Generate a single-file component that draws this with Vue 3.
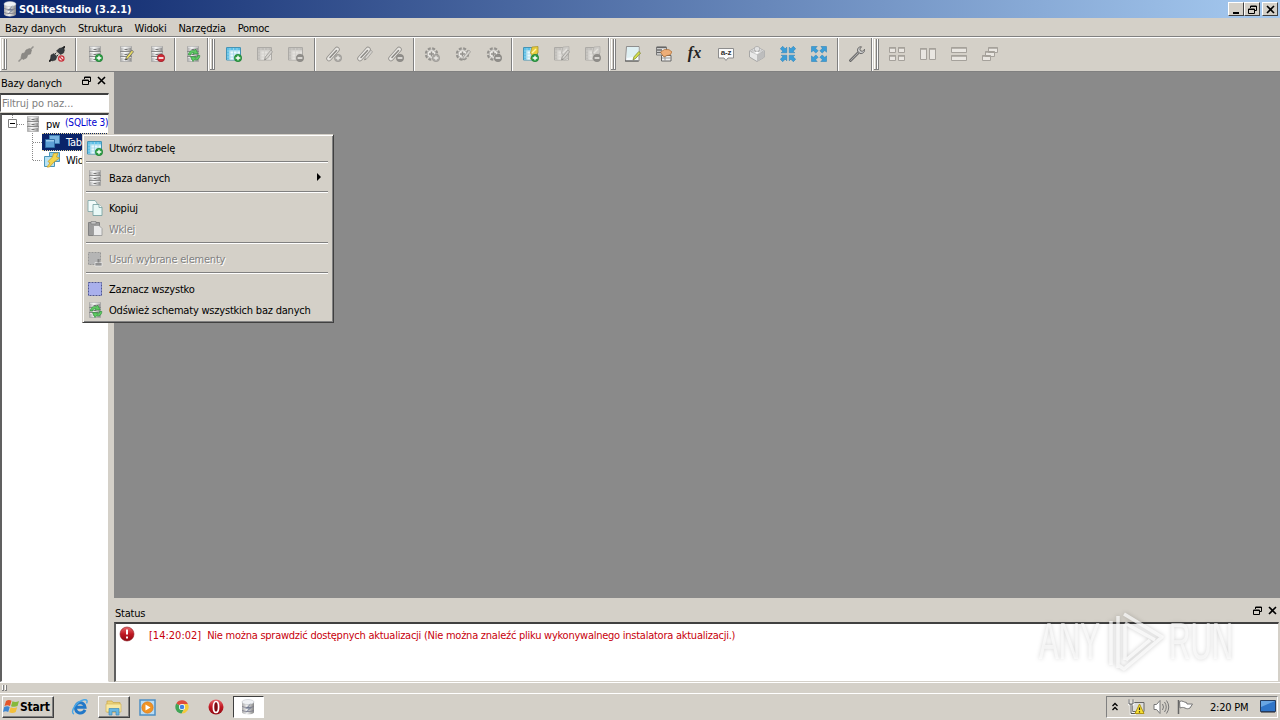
<template>
  <div class="screen">
    <svg class="defs" width="0" height="0">
      <defs>
        <linearGradient id="metal" x1="0" x2="1">
          <stop offset="0" stop-color="#a9a9a9" />
          <stop offset=".4" stop-color="#f2f2f2" />
          <stop offset="1" stop-color="#858585" />
        </linearGradient>
        <linearGradient id="ball" x1="0" y1="0" x2="0" y2="1">
          <stop offset="0" stop-color="#e8696c" />
          <stop offset=".5" stop-color="#c01822" />
          <stop offset="1" stop-color="#8f0a12" />
        </linearGradient>
      </defs>
      <symbol id="plus" viewBox="0 0 16 16">
        <circle cx="12" cy="12" r="3.7" fill="#2ea044" stroke="#15752b" stroke-width=".6" />
        <path d="M9.7 12h4.6M12 9.7v4.6" stroke="#fff" stroke-width="1.3" />
      </symbol>
      <symbol id="minus" viewBox="0 0 16 16">
        <circle cx="12" cy="12" r="3.7" fill="#cf2a35" stroke="#951720" stroke-width=".6" />
        <path d="M9.6 12h4.8" stroke="#fff" stroke-width="1.6" />
      </symbol>
      <symbol id="pencil" viewBox="0 0 16 16">
        <path d="M7.5 14l.8-3 5.500-6.800 1.800 1.500-5.500 6.800z" fill="#e9dc62" stroke="#666" stroke-width=".8" />
        <path d="M7.5 14l.5-1.600 1 .8z" fill="#222" />
      </symbol>
      <symbol id="database" viewBox="0 0 16 16">
        <path d="M2.500.5h11v15h-11z" fill="url(#metal)" stroke="#a5a5a5" stroke-width=".7" />
        <path d="M2 5.500h12M2 10.500h12" stroke="#8a8a8a" />
        <path d="M3 1.200h10M3 6.500h10M3 11.500h10" stroke="#fff" opacity=".6" />
        <path d="M6.500 3.500h3M6.500 8.500h3M6.500 13.500h3" stroke="#777" />
      </symbol>
      <symbol id="db-add" viewBox="0 0 16 16"><use href="#database" /><use href="#plus" /></symbol>
      <symbol id="db-edit" viewBox="0 0 16 16"><use href="#database" /><use href="#pencil" /></symbol>
      <symbol id="db-del" viewBox="0 0 16 16"><use href="#database" /><use href="#minus" /></symbol>
      <symbol id="db-refresh" viewBox="0 0 16 16">
        <use href="#database" />
        <path d="M3.500 9c0-3.500 3-5.300 5.800-4.300L10.500 3l2.700 4.800H7.800l1-1.300C7 6.200 6 7.200 5.800 9z" fill="#5fca63" stroke="#218a30" stroke-width=".6" />
        <path d="M14.800 9.500c0 3.500-3 5.300-5.500 4.300L8 15.500 5.500 10.700h5.300l-.9 1.300c1.600.2 2.500-.8 2.700-2.500z" fill="#5fca63" stroke="#218a30" stroke-width=".6" />
      </symbol>
      <symbol id="plug" viewBox="0 0 16 16">
        <path d="M.5 15.500L5 11M11 5L15.500.5" stroke="#555" stroke-width="1.500" />
        <path d="M3 11.500l1-4 2.500-.5L8 4l3.500-1.500 2 1.500-1 4-2.500.5L8.500 12 5 13.500z" fill="#444" stroke="#333" stroke-width=".6" />
      </symbol>
      <symbol id="unplug" viewBox="0 0 16 16">
        <path d="M0 15.500l3-2.500M13.500 3L16 .3" stroke="#222" stroke-width="2" />
        <path d="M1.500 13L2 9l3-1.500 3 3L6.500 14l-3.500 1zM7.500 5L10 2.500l4-1L15.500 4l-1 3-3 1.500z" fill="#363c40" stroke="#222" stroke-width=".5" />
        <path d="M6 8l1.300-1.300M8 10l1.300-1.300" stroke="#333" />
        <circle cx="12.300" cy="12.500" r="2.700" fill="#f6dada" stroke="#c9303a" stroke-width="1.200" />
        <path d="M10.500 10.700l3.700 3.700" stroke="#c9303a" stroke-width="1.200" />
      </symbol>
      <symbol id="table" viewBox="0 0 16 16">
        <path d="M.5 1.500h14v12.500H.5z" fill="#fff" stroke="#4593b4" />
        <path d="M1 2h13v2.500H1zM1 4.500h2.500v9H1z" fill="#5cc0e8" />
        <path d="M4 5h10v8.500H4z" fill="#eaf8fd" />
        <path d="M1 5h13M1 8h13M1 11h13M4 2v12M7.500 2v12M11 2v12" stroke="#a3d8ea" stroke-width=".8" />
      </symbol>
      <symbol id="table-add" viewBox="0 0 16 16"><use href="#table" /><use href="#plus" /></symbol>
      <symbol id="table-edit" viewBox="0 0 16 16"><use href="#table" /><use href="#pencil" /></symbol>
      <symbol id="table-del" viewBox="0 0 16 16"><use href="#table" /><use href="#minus" /></symbol>
      <symbol id="clip" viewBox="0 0 16 16">
        <path d="M3 12.500L11 3.500" stroke="#555" stroke-width="5.500" stroke-linecap="round" />
        <path d="M3 12.500L11 3.500" stroke="#fff" stroke-width="3.800" stroke-linecap="round" />
        <path d="M4 11.500L10.500 4.500" stroke="#444" stroke-width="1.500" stroke-linecap="round" />
      </symbol>
      <symbol id="clip-add" viewBox="0 0 16 16"><use href="#clip" /><use href="#plus" /></symbol>
      <symbol id="clip-edit" viewBox="0 0 16 16"><use href="#clip" /><use href="#pencil" /></symbol>
      <symbol id="clip-del" viewBox="0 0 16 16"><use href="#clip" /><use href="#minus" /></symbol>
      <symbol id="gear" viewBox="0 0 16 16">
        <circle cx="7.500" cy="8" r="5" fill="#fff" stroke="#555" stroke-width="3.400" stroke-dasharray="2.600 1.330" />
        <circle cx="7.500" cy="8" r="4.300" fill="#fff" stroke="#999" />
        <path d="M7.500 5.500v5M5 8h5" stroke="#555" stroke-width="1.500" />
      </symbol>
      <symbol id="gear-add" viewBox="0 0 16 16"><use href="#gear" /><use href="#plus" /></symbol>
      <symbol id="gear-edit" viewBox="0 0 16 16"><use href="#gear" /><use href="#pencil" /></symbol>
      <symbol id="gear-del" viewBox="0 0 16 16"><use href="#gear" /><use href="#minus" /></symbol>
      <symbol id="view" viewBox="0 0 16 16">
        <use href="#table" />
        <path d="M9 1l6-.5v6.500l-1.500 1 1 4-4 2-3-1 1.500-4-1.500-2z" fill="#e7cc3d" stroke="#a89025" stroke-width=".7" />
        <path d="M9 7l4-4" stroke="#fff6a5" stroke-width="1.500" />
      </symbol>
      <symbol id="view-add" viewBox="0 0 16 16"><use href="#view" /><use href="#plus" /></symbol>
      <symbol id="view-edit" viewBox="0 0 16 16"><use href="#view" /><use href="#pencil" /></symbol>
      <symbol id="view-del" viewBox="0 0 16 16"><use href="#view" /><use href="#minus" /></symbol>
      <symbol id="editor" viewBox="0 0 16 16">
        <path d="M1.500.5h12.500v14.500H.5z" fill="#f7fcff" stroke="#777" stroke-width=".8" />
        <path d="M2 1h11.500v9L2 12z" fill="#dff0f3" />
        <path d="M0 15h13.500" stroke="#555" />
        <path d="M8 14l.8-3 5-5.500 1.800 1.500-5 5.500z" fill="#d4df4c" stroke="#76812a" stroke-width=".7" />
      </symbol>
      <symbol id="history" viewBox="0 0 16 16">
        <path d="M.5 1h10v8H.5z" fill="#eee" stroke="#777" />
        <path d="M1 1.500h9M1 4h5M1 6.500h5" stroke="#666" stroke-width="1.300" />
        <path d="M5.500 9.500h9.500V15H5.500z" fill="#f1f1f1" stroke="#666" />
        <path d="M6 12h9M9 9.500V15" stroke="#999" />
        <path d="M4.500 6l4-2.500 4.500.2 3 2.300-2 3-3 .5L8 11 6 8.500z" fill="#eeae78" stroke="#a8672e" stroke-width=".7" />
      </symbol>
      <symbol id="collation" viewBox="0 0 16 16">
        <path d="M.5 2.500h15v9.500H10l-2 2.500L6 12H.5z" fill="#fafafa" stroke="#8d8d8d" />
      </symbol>
      <symbol id="extension" viewBox="0 0 16 16">
        <path d="M.5 5L8 1l7.500 4v6L8 15.500.5 11z" fill="#e8e8e8" stroke="#999" stroke-width=".8" />
        <path d="M.5 5L8 8.500 15.500 5 8 1z" fill="#fff" stroke="#aaa" stroke-width=".6" />
        <path d="M8 8.500l7.500-3.500v6L8 15.500z" fill="#bdbdbd" />
        <path d="M5.500 2a2.500 1.500 0 015 0v2a2.500 1.500 0 01-5 0zM2.500 5a2 1 0 014 0v1h-4zM9.500 5a2 1 0 014 0v1h-4z" fill="#e2e2e2" stroke="#999" stroke-width=".5" />
      </symbol>
      <symbol id="arrow-in" viewBox="0 0 16 16">
        <path d="M6.800 1.200v5.600H1.200l1.600-1.600L.3 2.700 2.700.3l2.500 2.500z" fill="#3b9ed8" stroke="#217bb5" stroke-width=".5" />
      </symbol>
      <symbol id="arrow-out" viewBox="0 0 16 16">
        <path d="M.5 6.200V.5h5.700L4.500 2.200l2.600 2.600-2.300 2.300-2.600-2.600z" fill="#3b9ed8" stroke="#217bb5" stroke-width=".5" />
      </symbol>
      <symbol id="shrink" viewBox="0 0 16 16">
        <use href="#arrow-in" />
        <use href="#arrow-in" transform="rotate(90 8 8)" />
        <use href="#arrow-in" transform="rotate(180 8 8)" />
        <use href="#arrow-in" transform="rotate(270 8 8)" />
      </symbol>
      <symbol id="expand" viewBox="0 0 16 16">
        <use href="#arrow-out" />
        <use href="#arrow-out" transform="rotate(90 8 8)" />
        <use href="#arrow-out" transform="rotate(180 8 8)" />
        <use href="#arrow-out" transform="rotate(270 8 8)" />
      </symbol>
      <symbol id="wrench" viewBox="0 0 16 16">
        <path d="M1.500 14.500L10 6" stroke="#555" stroke-width="2.600" stroke-linecap="round" />
        <path d="M1.700 14.300L10 6" stroke="#aaa" stroke-width="1.200" stroke-linecap="round" />
        <path d="M8.500 5c-.5-3 2-4.700 4-4.200L10.800 3l.7 1.800 2 .5 2-2c.5 2.500-1.500 4.700-4.500 4.200z" fill="#ccc" stroke="#555" stroke-width=".8" />
      </symbol>
      <symbol id="tile" viewBox="0 0 16 16">
        <path d="M.5 1.500h6v5h-6zM9.500 1.500h6v5h-6zM.5 9.500h6v5h-6zM9.500 9.500h6v5h-6z" fill="#e9e6e1" stroke="#a5a19b" />
        <path d="M0 2h7M9 2h7M0 10h7M9 10h7" stroke="#a5a19b" stroke-width="1.500" />
      </symbol>
      <symbol id="columns" viewBox="0 0 16 16">
        <path d="M.5 2.500h6v11h-6zM9.500 2.500h6v11h-6z" fill="#e9e6e1" stroke="#a5a19b" />
        <path d="M0 3h7M9 3h7" stroke="#a5a19b" stroke-width="1.500" />
      </symbol>
      <symbol id="rows" viewBox="0 0 16 16">
        <path d="M.5 1.500h15v5H.5zM.5 9.500h15v5H.5z" fill="#e9e6e1" stroke="#a5a19b" />
        <path d="M.5 2h15M.5 10h15" stroke="#a5a19b" stroke-width="1.500" />
      </symbol>
      <symbol id="cascade" viewBox="0 0 16 16">
        <path d="M6.500 1.500h9v5h-9zM3.500 5.500h9v5h-9zM.5 9.500h8v5h-8z" fill="#e9e6e1" stroke="#a5a19b" />
        <path d="M6.500 2h9M3.500 6h9M.5 10h8" stroke="#a5a19b" stroke-width="1.500" />
      </symbol>
      <symbol id="tables" viewBox="0 0 16 16">
        <path d="M5.500 1.500h10v8h-10z" fill="#79b4e2" stroke="#3f7fb4" />
        <path d="M1.500 5.500h9v8h-9z" fill="#5d9fd6" stroke="#316fa8" />
        <path d="M2 6h8v1.500H2z" fill="#9dcbed" />
      </symbol>
      <symbol id="views" viewBox="0 0 16 16">
        <path d="M5.500.5h10v9h-10z" fill="#8ccfec" stroke="#4b95b9" />
        <path d="M.5 4.500h10v10H.5z" fill="#b7e2f3" stroke="#4b95b9" />
        <path d="M9.500 1.500L14 1l-1.500 4 3 1-5.500 4-4.500 5H3l3-4-2-1.500L8.500 5z" fill="#f3d64d" stroke="#c99d28" stroke-width=".8" />
      </symbol>
      <symbol id="copy" viewBox="0 0 16 16">
        <path d="M1 .5h7l2 2.500v8.500H1z" fill="#f1fbfa" stroke="#7ba5a5" stroke-width=".8" />
        <path d="M6 4.500h6l3 3v8H6z" fill="#e9f9f7" stroke="#6f9c9c" stroke-width=".8" />
        <path d="M12 4.500v3h3" fill="#fff" stroke="#6f9c9c" stroke-width=".8" />
      </symbol>
      <symbol id="paste" viewBox="0 0 16 16">
        <path d="M1.500 1.500h11v13h-11z" fill="#a09b95" stroke="#85807a" />
        <path d="M4 .5h5v2.500H4z" fill="#c9c5bf" stroke="#85807a" stroke-width=".7" />
        <path d="M6.500 4.500h5.500l3 3v7H6.500z" fill="#eceae6" stroke="#9a958f" stroke-width=".8" />
      </symbol>
      <symbol id="erase" viewBox="0 0 16 16">
        <path d="M1.500 1.500h12v12h-12z" fill="#bab4ad" stroke="#9a958f" stroke-dasharray="2 1" />
        <path d="M8 11.500h7V15H8z" fill="#95908a" stroke="#eee" stroke-width=".7" /><path d="M11.500 8v3.500" stroke="#88837d" stroke-width="2" />
      </symbol>
      <symbol id="select" viewBox="0 0 16 16">
        <path d="M1 1.500h14v13H1z" fill="#a9b0ec" />
        <path d="M1.500 1.500h13v13h-13z" fill="none" stroke="#4f5690" stroke-dasharray="2 1" />
      </symbol>
      <symbol id="disks" viewBox="0 0 16 16">
        <path d="M2 3v10.500c1 2.500 11 2.500 12 0V3z" fill="url(#metal)" />
        <ellipse cx="8" cy="3" rx="6" ry="2.500" fill="#f0f2f5" stroke="#b6bac0" stroke-width=".5" />
        <path d="M2 7c1 2 11 2 12 0M2 11c1 2 11 2 12 0" fill="none" stroke="#778" stroke-width=".8" />
        <path d="M11 4l-6 6 3.500-.3L5 14.500l7-6H8.500z" fill="#596786" opacity=".6" />
      </symbol>
      <symbol id="restore" viewBox="0 0 9 9">
        <path d="M2.500 3V1h6v4.500H6.500M2.500 1.500h6M.5 4h6v4.500h-6zM.5 4.500h6" fill="none" stroke="#000" />
      </symbol>
      <symbol id="close" viewBox="0 0 9 9"><path d="M1 1l7 7M8 1L1 8" stroke="#000" stroke-width="1.600" /></symbol>
    </svg>

    <header class="titlebar">
      <svg class="icon"><use href="#disks" /></svg>
      <span class="title">SQLiteStudio (3.2.1)</span>
      <span class="win-btn"><svg viewBox="0 0 9 9"><path d="M1 8h6" stroke="#000" stroke-width="2" /></svg></span>
      <span class="win-btn"><svg><use href="#restore" /></svg></span>
      <span class="win-btn win-close"><svg><use href="#close" /></svg></span>
    </header>

    <nav class="menubar">
      <span v-for="name in menus" :key="name">{{ name }}</span>
    </nav>

    <div class="toolbars">
      <div v-for="(bar, b) in toolbars" :key="b" class="toolbar" :class="'bar-' + b">
        <i class="handle"></i>
        <template v-for="(tool, t) in bar" :key="t">
          <i v-if="typeof tool === 'number'" class="tool-sep" :style="{ width: tool + 'px' }"></i>
          <span v-else-if="tool === 'fx'" class="tool fx">fx</span>
          <span v-else class="tool" :class="{ off: tool.startsWith('!') }">
            <svg class="icon"><use :href="'#' + tool.replace('!', '')" /></svg>
            <span v-if="tool === 'collation'" class="az">a-z</span>
          </span>
        </template>
      </div>
    </div>

    <main class="body">
      <aside class="dock">
        <div class="dock-title">
          <span class="dock-name">Bazy danych</span>
          <svg class="mini"><use href="#restore" /></svg>
          <svg class="mini"><use href="#close" /></svg>
        </div>
        <div class="filter">Filtruj po naz...</div>
        <div class="tree">
          <div class="node">
            <svg class="branch" width="25" height="18">
              <path d="M12.500 0v5M17 9.500h8" stroke="#888" stroke-dasharray="1 1" />
              <path d="M8.500 4.500h8v8h-8z" fill="#fff" stroke="#808080" /><path d="M10 8.500h5" stroke="#000" />
            </svg>
            <svg class="icon"><use href="#database" /></svg>
            <span class="db-name">pw</span><span class="db-type">(SQLite 3)</span>
          </div>
          <div class="node">
            <svg class="branch" width="42" height="18"><path d="M32.500 0v18M33 9.500h9" stroke="#888" stroke-dasharray="1 1" /></svg>
            <div class="node-label selected"><svg class="icon"><use href="#tables" /></svg><span>Tabele</span></div>
          </div>
          <div class="node">
            <svg class="branch" width="42" height="18"><path d="M32.500 0v9.500h9" fill="none" stroke="#888" stroke-dasharray="1 1" /></svg>
            <div class="node-label"><svg class="icon"><use href="#views" /></svg><span>Widoki</span></div>
          </div>
        </div>
      </aside>

      <section class="work">
        <div class="mdi"></div>
        <div class="dock-title status-title">
          <span class="dock-name">Status</span>
          <svg class="mini"><use href="#restore" /></svg>
          <svg class="mini"><use href="#close" /></svg>
        </div>
        <div class="status">
          <svg width="16" height="16" viewBox="0 0 16 16">
            <circle cx="8" cy="8" r="7" fill="url(#ball)" stroke="#8d1a20" stroke-width=".6" />
            <path d="M8 3.500v5M8 10.500v2" stroke="#fff" stroke-width="2" />
          </svg>
          <span class="time">[14:20:02]</span>
          <span class="message">Nie można sprawdzić dostępnych aktualizacji (Nie można znaleźć pliku wykonywalnego instalatora aktualizacji.)</span>
        </div>
      </section>
    </main>

    <div class="statusbar"><i></i><i></i></div>

    <footer class="taskbar">
      <div class="start">
        <svg width="17" height="16" viewBox="0 0 17 16">
          <path d="M3 2c2-1.500 4-1.200 5.500-.2L7 7C5.500 6 3.500 6 1.500 7z" fill="#e4562a" />
          <path d="M9.500 2.200c2 1 4 1 6.500-.2L14.500 7c-2 1-4.500 1-6.500.2z" fill="#86b93b" />
          <path d="M1.200 8c2-1 4-1 5.500 0l-1.500 5c-1.500-1-3.500-1-5.200 0z" fill="#3d86d2" />
          <path d="M7.700 8.300c2 1 4 1 6.500 0L12.700 13c-2 1.300-4.500 1.300-6.500.3z" fill="#f3bf3a" />
        </svg>
        <span>Start</span>
      </div>
      <div class="task">
        <svg width="18" height="16" viewBox="0 0 18 16">
          <path d="M14 10.800c-2.500 5-9.500 4-9.500-2s8.500-7 9.500-.6H6" fill="none" stroke="#2178c8" stroke-width="3" />
          <path d="M3 15C-1.500 13.500 5 2.500 13 .8c3.500-.6 3.500 1.700 2.500 3.500" fill="none" stroke="#4aa7e6" stroke-width="1.400" />
        </svg>
      </div>
      <div class="task raised">
        <svg width="18" height="17" viewBox="0 0 18 17">
          <path d="M2 2h5l1 1.500h7V13H2z" fill="#ecd27a" stroke="#c7a544" stroke-width=".7" />
          <path d="M1 5h15v8H1z" fill="#f8e8a2" stroke="#d3b456" stroke-width=".7" />
          <path d="M4 16V9.500h10V16h-3v-3.500H7V16z" fill="#66b6e3" stroke="#3f89b8" stroke-width=".7" />
        </svg>
      </div>
      <div class="task">
        <svg width="17" height="17" viewBox="0 0 17 17">
          <path d="M1 1h15v15H1z" fill="#b9dcf4" stroke="#4d8fc3" stroke-width="1.500" />
          <circle cx="8.500" cy="8.500" r="5.700" fill="#f09325" stroke="#d1721a" stroke-width=".6" /><path d="M6.500 5.500l5 3-5 3z" fill="#fff" />
        </svg>
      </div>
      <div class="task">
        <svg width="14" height="14" viewBox="0 0 16 16">
          <path d="M8 8L1.500 4A7.500 7.500 0 0114.700 4.500H8z" fill="#df4a3c" />
          <path d="M8 8L1.500 4A7.500 7.500 0 007.500 15.500L10.500 10z" fill="#41a556" />
          <path d="M8 4.500h6.700A7.500 7.500 0 017.500 15.500L11 10z" fill="#f4ca3b" />
          <circle cx="8" cy="8" r="3.500" fill="#fff" /><circle cx="8" cy="8" r="2.700" fill="#4583e0" />
        </svg>
      </div>
      <div class="task">
        <svg width="16" height="16" viewBox="0 0 16 16">
          <circle cx="8" cy="8" r="7.500" fill="url(#ball)" /><ellipse cx="8" cy="8" rx="2.600" ry="5.500" fill="#7f0c12" stroke="#fff" stroke-width="1.700" />
        </svg>
      </div>
      <div class="task active"><svg class="icon"><use href="#disks" /></svg></div>
      <div class="tray">
        <svg width="8" height="10" viewBox="0 0 8 10"><path d="M1.500 4L4 1.500 6.500 4M1.500 8L4 5.500 6.500 8" fill="none" stroke="#000" stroke-width="1.300" /></svg>
        <svg class="net" width="17" height="16" viewBox="0 0 17 16">
          <path d="M4.500 3.500H16v9H4.500z" fill="#ddd" stroke="#666" />
          <path d="M1 1v4h4V1M3 5v9.500h5" fill="none" stroke="#fff" stroke-width="2.500" /><path d="M1 .5V5h4V.5M3 5v9.500h5" fill="none" stroke="#555" />
          <path d="M11.500 5l4.500 9.500H7z" fill="#f7df34" stroke="#b09514" /><path d="M11.500 8.500V11M11.500 12.300v1.200" stroke="#222" stroke-width="1.200" />
        </svg>
        <svg class="sound" width="17" height="16" viewBox="0 0 17 16">
          <path d="M1 5.500h2.500L7 1.500v13l-3.500-4H1z" fill="#fff" stroke="#777" />
          <path d="M9.500 5q2 3 0 6M11.500 3q3.500 5 0 10M13.500 1.500q4.500 6.500 0 13" fill="none" stroke="#777" />
        </svg>
        <svg class="flag" width="17" height="16" viewBox="0 0 17 16">
          <path d="M2.500 2.500c3-1.500 4.500 1 7 1l.5 1.500h5.500L13 9c-2 1-3 1-5 0s-3.500-.5-5 0z" fill="#fff" stroke="#777" /><path d="M1.500 1v14" stroke="#666" stroke-width="1.500" />
        </svg>
        <span class="clock">2:20 PM</span>
        <svg class="desk" width="16" height="14" viewBox="0 0 16 14">
          <path d="M.5.5h15v11H.5z" fill="#2f75c8" stroke="#253b5d" /><path d="M1 1h14L1 7z" fill="#69a6e3" /><path d="M1 12.500h14" stroke="#777" />
        </svg>
      </div>
    </footer>

    <ul class="context-menu">
      <template v-for="(item, i) in contextMenu" :key="i">
        <li v-if="!item" class="divider"></li>
        <li v-else class="entry" :class="{ disabled: item.disabled }">
          <svg class="icon"><use :href="'#' + item.icon" /></svg>
          <span>{{ item.label }}</span>
          <i v-if="item.sub" class="arrow"></i>
        </li>
      </template>
    </ul>

    <div class="watermark">
      <span class="word">ANY</span>
      <svg width="62" height="70" viewBox="0 0 62 70">
        <path d="M7 15v44M14 10v52M21 18v36M20 8l38 23-38 32-6-4M21 17l30 17M22 54l24-20" fill="none" stroke="#fff" stroke-opacity=".7" stroke-width="3.500" stroke-linejoin="round" />
      </svg>
      <span class="word">RUN</span>
    </div>
  </div>
</template>

<script setup>
const menus = ["Bazy danych", "Struktura", "Widoki", "Narzędzia", "Pomoc"];

// number = separator width, leading "!" = disabled action
const toolbars = [
  ["!plug", "unplug", 7, "db-add", "db-edit", "db-del", 5, "db-refresh"],
  [
    "table-add", "!table-edit", "!table-del", 7,
    "!clip-add", "!clip-edit", "!clip-del", 5,
    "!gear-add", "!gear-edit", "!gear-del", 6,
    "view-add", "!view-edit", "!view-del",
  ],
  ["editor", "history", "fx", "collation", "extension", "shrink", "expand", 7, "wrench"],
  ["tile", "columns", "rows", "cascade"],
];

const contextMenu = [
  { icon: "table-add", label: "Utwórz tabelę" },
  null,
  { icon: "database", label: "Baza danych", sub: true },
  null,
  { icon: "copy", label: "Kopiuj" },
  { icon: "paste", label: "Wklej", disabled: true },
  null,
  { icon: "erase", label: "Usuń wybrane elementy", disabled: true },
  null,
  { icon: "select", label: "Zaznacz wszystko" },
  { icon: "db-refresh", label: "Odśwież schematy wszystkich baz danych" },
];
</script>

<style>
html,
body {
  margin: 0;
  overflow: hidden;
}
</style>

<style scoped>
.screen {
  position: relative;
  display: flex;
  flex-direction: column;
  width: 1280px;
  height: 720px;
  overflow: hidden;
  background: #d4d0c8;
  color: #000;
  font-family: "DejaVu Sans Condensed", "DejaVu Sans", sans-serif;
  font-size: 11px;
  letter-spacing: -0.21px;
  line-height: 14px;
  white-space: nowrap;
}

.screen * {
  box-sizing: border-box;
}

svg {
  flex: none;
  display: block;
}

.defs {
  position: absolute;
}

.icon {
  width: 16px;
  height: 16px;
}

.titlebar {
  display: flex;
  align-items: center;
  height: 18px;
  padding: 0 2px;
  background: linear-gradient(90deg, #0a246a, #a6caf0);
}

.title {
  flex: 1;
  padding-top: 1px;
  margin-left: 1px;
  color: #fff;
  font-weight: bold;
  letter-spacing: -0.05px;
}

.win-btn {
  display: flex;
  align-items: center;
  justify-content: center;
  width: 16px;
  height: 14px;
  background: #d4d0c8;
  border: 1px solid;
  border-color: #fff #404040 #404040 #fff;
}

.win-btn svg,
.mini {
  width: 9px;
  height: 9px;
}

.win-close {
  margin-left: 2px;
}

.menubar {
  display: flex;
  align-items: center;
  gap: 12px;
  height: 19px;
  padding: 4px 5px 0;
  border-bottom: 1px solid #808080;
}

.toolbars {
  display: flex;
  height: 35px;
  border-top: 1px solid #fff;
  border-bottom: 1px solid #808080;
}

.toolbar {
  display: flex;
  align-items: center;
  padding-bottom: 1px;
  border-left: 1px solid #fff;
  border-right: 1px solid #808080;
}

.bar-0 {
  width: 208px;
}

.bar-1 {
  width: 401px;
}

.bar-2 {
  width: 263px;
}

.bar-3 {
  flex: 1;
  border-right: 0;
}

.handle {
  flex: none;
  width: 5px;
  height: 31px;
  margin: 0 3px 0 1px;
  border-bottom: 1px solid #808080;
  background: linear-gradient(90deg, #fff 1px, #d4d0c8 1px, #d4d0c8 2px, #808080 2px, #808080 3px, #fff 3px, #fff 4px, #808080 4px);
}

.bar-2 .handle {
  margin-right: 1px;
}

.bar-3 .handle {
  margin-right: 2px;
}

.tool {
  display: flex;
  flex: none;
  justify-content: center;
  align-items: center;
  position: relative;
  width: 31px;
  height: 24px;
}

.fx {
  padding-bottom: 2px;
  color: #222;
  font: italic bold 16px/16px "Liberation Serif", serif;
  letter-spacing: 0;
}

.az {
  position: absolute;
  left: 8px;
  top: 6px;
  width: 16px;
  text-align: center;
  color: #333;
  font: bold 8px/10px "Liberation Sans", sans-serif;
}

.off .icon {
  filter: grayscale(1);
  opacity: 0.5;
}

.tool-sep {
  flex: none;
  height: 33px;
  background: linear-gradient(90deg, #808080 50%, #fff 50%) center / 2px 100% no-repeat;
}

.body {
  display: flex;
  height: 610px;
}

.dock {
  width: 109px;
  display: flex;
  flex-direction: column;
}

.dock-title {
  display: flex;
  align-items: center;
  height: 21px;
  padding: 0 3px 0 1px;
}

.dock-name {
  flex: 1;
  padding-top: 3px;
}

.mini {
  margin: 0 0 4px 6px;
}

.filter {
  height: 19px;
  padding: 2px 1px;
  color: #808080;
  background: #fff;
  border: 1px solid;
  border-color: #404040 #fff #fff #606060;
  border-top-width: 2px;
  letter-spacing: -0.1px;
}

.tree {
  flex: 1;
  margin-top: 1px;
  background: #fff;
  border: 1px solid;
  border-color: #404040 #d4d0c8 #fff #606060;
  border-width: 2px 1px 1px 2px;
  overflow: hidden;
}

.node {
  display: flex;
  align-items: center;
  height: 18px;
}

.branch {
  margin-left: -2px;
}

.db-name {
  margin: 2px 5px 0 5px;
}

.db-type {
  margin-bottom: 2px;
  color: #0000d0;
  font-size: 10px;
  letter-spacing: -0.15px;
}

.node-label {
  display: flex;
  flex: 1;
  align-items: center;
  gap: 6px;
  height: 18px;
  padding-left: 2px;
}

.node-label span {
  padding-top: 1px;
}

.selected {
  color: #fff;
  background: #0a246a;
  border: 1px dotted #e8d8a0;
  border-left: 0;
}

.work {
  flex: 1;
  margin-left: 5px;
  display: flex;
  flex-direction: column;
}

.mdi {
  height: 526px;
  background: #8a8a8a;
}

.status-title {
  height: 24px;
  padding-top: 4px;
}

.status {
  flex: 1;
  display: flex;
  align-items: flex-start;
  padding: 2px 4px 2px 3px;
  margin-right: 1px;
  color: #c8000c;
  background: #fff;
  border: 1px solid;
  border-color: #404040 #d4d0c8 #d4d0c8 #606060;
  border-width: 2px 1px 1px 2px;
}

.time {
  margin: 3px 0 0 14px;
  letter-spacing: 0;
}

.message {
  margin: 3px 0 0 6px;
  letter-spacing: -0.25px;
}

.statusbar {
  display: flex;
  gap: 1px;
  height: 11px;
  padding: 2px;
  border-top: 1px solid #fff;
}

.statusbar i {
  width: 2px;
  height: 6px;
  border-right: 1px solid #808080;
  border-bottom: 1px solid #808080;
  background: #fff;
}

.taskbar {
  display: flex;
  align-items: center;
  flex: 1;
  padding: 0 2px;
  border-top: 1px solid #fff;
}

.start {
  display: flex;
  align-items: center;
  width: 52px;
  height: 22px;
  margin-right: 10px;
  border: 1px solid;
  border-color: #fff #404040 #404040 #fff;
  box-shadow: inset -1px -1px #808080;
  font-size: 12px;
  font-weight: bold;
}

.task {
  display: flex;
  align-items: center;
  justify-content: center;
  width: 32px;
  height: 22px;
  margin-right: 2px;
}

.task svg {
  margin-right: 1px;
}

.raised {
  border: 1px solid;
  border-color: #fff #404040 #404040 #fff;
  box-shadow: inset -1px -1px #808080;
}

.active {
  width: 31px;
  margin-left: -1px;
  background: #fff;
  border: 1px solid;
  border-color: #404040 #fff #fff #404040;
}

.tray {
  display: flex;
  align-items: center;
  width: 172px;
  height: 22px;
  margin-left: auto;
  padding-left: 4px;
  border: 1px solid;
  border-color: #808080 #fff #fff #808080;
}

.net {
  margin-left: 9px;
}

.sound {
  margin-left: 8px;
}

.flag {
  margin-left: 7px;
}

.clock {
  width: 41px;
  margin: 1px 0 0 16px;
}

.desk {
  margin-left: 9px;
}

.context-menu {
  position: absolute;
  left: 82px;
  top: 134px;
  width: 252px;
  height: 189px;
  margin: 0;
  padding: 1px 5px 1px 3px;
  list-style: none;
  background: #d4d0c8;
  border: 1px solid;
  border-color: #d4d0c8 #404040 #404040 #d4d0c8;
  box-shadow: inset 1px 1px #fff, inset -1px -1px #808080;
}

.entry {
  display: flex;
  align-items: center;
  gap: 6px;
  height: 21px;
  padding: 2px 0 0 1px;
}

.entry span {
  padding-top: 3px;
}

.disabled {
  color: #808080;
  text-shadow: 1px 1px #fff;
}

.disabled .icon {
  filter: grayscale(1);
}

.divider {
  height: 9px;
  background: linear-gradient(#808080 50%, #fff 50%) center / 100% 2px no-repeat;
}

.arrow {
  margin: 0 7px 2px auto;
  border: solid transparent;
  border-width: 4px 0 4px 4px;
  border-left-color: #000;
}

.watermark {
  position: absolute;
  left: 1039px;
  top: 606px;
  display: flex;
  align-items: center;
  gap: 3px;
  filter: drop-shadow(0 0 2px rgba(0, 0, 0, 0.28));
}

.word {
  width: 62px;
  color: rgba(255, 255, 255, 0.6);
  font: 52px/60px "Liberation Sans", sans-serif;
  letter-spacing: 0;
  transform: scaleX(0.57);
  transform-origin: 0 50%;
}
</style>
